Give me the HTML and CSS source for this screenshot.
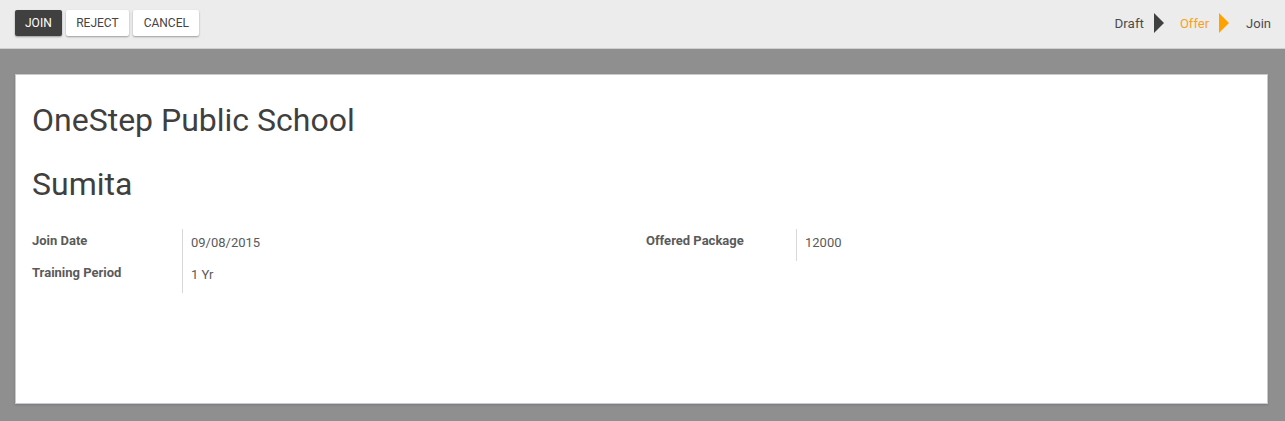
FILE: index.html
```html
<!DOCTYPE html>
<html>
<head>
<meta charset="utf-8">
<link rel="stylesheet" href="styles.css">
</head>
<body>
<div class="topbar">
  <div class="buttons">
    <button class="btn btn-primary">JOIN</button>
    <button class="btn">REJECT</button>
    <button class="btn">CANCEL</button>
  </div>
  <div class="status">
    <span class="step">Draft</span><span class="arrow arrow-dark"></span>
    <span class="step step-active">Offer</span><span class="arrow arrow-orange"></span>
    <span class="step">Join</span>
  </div>
</div>
<div class="content">
  <div class="sheet">
    <h1 class="title">OneStep Public School</h1>
    <h2 class="name">Sumita</h2>
    <div class="groups">
      <div class="group">
        <div class="labels">
          <div class="label">Join Date</div>
          <div class="label">Training Period</div>
        </div>
        <div class="values">
          <div class="value">09/08/2015</div>
          <div class="value">1 Yr</div>
        </div>
      </div>
      <div class="group">
        <div class="labels">
          <div class="label">Offered Package</div>
        </div>
        <div class="values">
          <div class="value">12000</div>
        </div>
      </div>
    </div>
  </div>
</div>
</body>
</html>
```
FILE: styles.css
```css
html, body {
  margin: 0;
  padding: 0;
}
body {
  font-family: Roboto, "Liberation Sans", sans-serif;
  background: #8f8f8f;
  width: 1285px;
  height: 421px;
  overflow: hidden;
  color: #4c4c4c;
}
.topbar {
  height: 48px;
  background: #ececec;
  border-bottom: 1px solid #cfcfcf;
  display: flex;
  align-items: center;
  justify-content: space-between;
  padding: 0 15px;
  box-sizing: content-box;
}
.buttons {
  display: flex;
  gap: 4px;
  margin-top: -2px;
}
.btn {
  font-family: Roboto, "Liberation Sans", sans-serif;
  font-size: 12px;
  height: 26px;
  padding: 0 10.5px;
  border: none;
  border-radius: 2px;
  background: #fff;
  color: #444;
  box-shadow: 0 1px 2px rgba(0,0,0,0.35);
  cursor: pointer;
}
.btn-primary {
  background: #404040;
  color: #fff;
  padding: 0 10px;
}
.status {
  display: flex;
  align-items: center;
  font-size: 13px;
  color: #4c4c4c;
  margin-right: -1px;
  margin-top: -2px;
}
.step:first-child {
  font-size: 13.4px;
}
.step-active {
  color: #f9a11b;
}
.arrow {
  width: 0;
  height: 0;
  border-top: 10px solid transparent;
  border-bottom: 10px solid transparent;
  border-left: 10px solid #404040;
  margin: 0 16px 0 10px;
}
.arrow-orange {
  border-left-color: #ffa200;
  margin: 0 17px 0 10px;
}
.content {
  padding: 25px 17px 0 15px;
}
.sheet {
  background: #fff;
  border: 1px solid #c9c9d0;
  height: 330px;
  padding: 0 16px;
  box-sizing: border-box;
  box-shadow: 0 1px 2px rgba(0,0,0,0.15);
}
.title {
  margin: 25px 0 0 0;
  font-size: 32px;
  font-weight: 400;
  line-height: 40px;
  color: #3f3f3f;
}
.name {
  margin: 24px 0 0 0;
  font-size: 32px;
  font-weight: 400;
  line-height: 40px;
  color: #3f3f3f;
}
.groups {
  display: flex;
  margin-top: 25px;
}
.group {
  display: flex;
  align-items: flex-start;
  width: 614px;
  flex-shrink: 0;
}
.labels {
  width: 150px;
  border-right: 1px solid #d8d8d8;
}
.label {
  font-size: 13px;
  font-weight: 700;
  color: #5a5a5a;
  height: 32px;
  line-height: 16px;
  padding-top: 4px;
  box-sizing: border-box;
}
.values {
  padding-left: 8px;
}
.value {
  font-size: 13px;
  color: #5a5a5a;
  height: 32px;
  line-height: 16px;
  padding-top: 6px;
  box-sizing: border-box;
}
```
